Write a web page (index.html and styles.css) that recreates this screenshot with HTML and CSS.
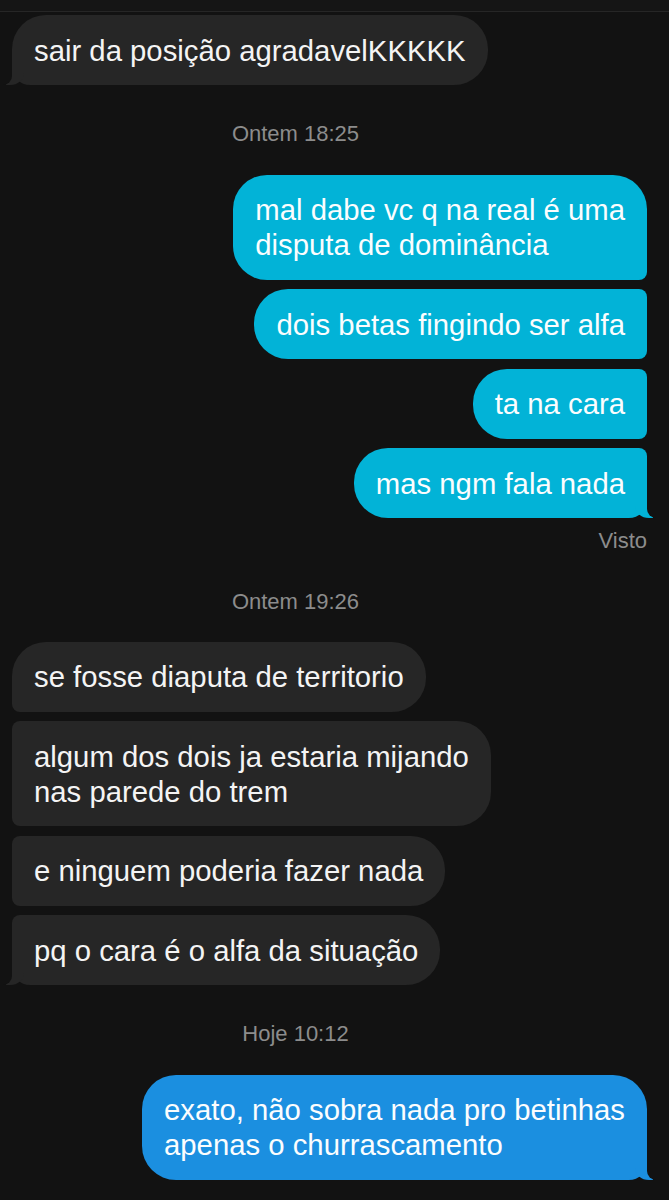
FILE: index.html
```html
<!DOCTYPE html>
<html lang="pt">
<head>
    <meta charset="UTF-8">
    <meta name="viewport" content="width=device-width, initial-scale=1.0">
    <title>Conversa</title>
    <link rel="stylesheet" href="styles.css">
</head>
<body>
    <div class="topbar"></div>
    <div class="chat">
        <div class="group in first-group">
            <div class="bubble gray tail">sair da posição agradavelKKKKK</div>
        </div>

        <div class="stamp">Ontem 18:25</div>

        <div class="group out">
            <div class="bubble blue top">mal dabe vc q na real é uma<br>disputa de dominância</div>
            <div class="bubble blue mid">dois betas fingindo ser alfa</div>
            <div class="bubble blue mid">ta na cara</div>
            <div class="bubble blue tail">mas ngm fala nada</div>
        </div>
        <div class="seen">Visto</div>

        <div class="stamp">Ontem 19:26</div>

        <div class="group in">
            <div class="bubble gray top">se fosse diaputa de territorio</div>
            <div class="bubble gray mid">algum dos dois ja estaria mijando<br>nas parede do trem</div>
            <div class="bubble gray mid">e ninguem poderia fazer nada</div>
            <div class="bubble gray tail">pq o cara é o alfa da situação</div>
        </div>

        <div class="stamp">Hoje 10:12</div>

        <div class="group out">
            <div class="bubble deep tail">exato, não sobra nada pro betinhas<br>apenas o churrascamento</div>
        </div>
    </div>
</body>
</html>
```

FILE: styles.css
```css
body {
    margin: 0;
    padding: 0;
    background-color: #121212;
    font-family: "Liberation Sans", Arial, sans-serif;
    color: #f4f4f4;
}
.topbar {
    height: 11px;
    background-color: #151515;
    border-bottom: 1px solid #262626;
}
.chat {
    display: flex;
    flex-direction: column;
    padding: 0 22px 0 12px;
}
.group {
    display: flex;
    flex-direction: column;
    gap: 9.5px;
}
.group.in {
    align-items: flex-start;
}
.group.out {
    align-items: flex-end;
}
.first-group {
    margin-top: 3px;
}
.bubble {
    position: relative;
    font-size: 29.3px;
    line-height: 35px;
    padding: 17.5px 22px;
    border-radius: 34px;
    white-space: nowrap;
}
.gray {
    background-color: #262626;
}
.blue {
    background-color: #02b3d7;
    color: #fbfdfe;
}
.deep {
    background-color: #1b8fe0;
    color: #fbfdfe;
}

/* grouped corners */
.in .top { border-bottom-left-radius: 8px; }
.in .mid { border-top-left-radius: 8px; border-bottom-left-radius: 8px; }
.in .tail { border-bottom-left-radius: 18px; }
.in .mid + .tail { border-top-left-radius: 8px; }
.out .top { border-bottom-right-radius: 8px; }
.out .mid { border-top-right-radius: 8px; border-bottom-right-radius: 8px; }
.out .tail { border-bottom-right-radius: 18px; }
.out .mid + .tail { border-top-right-radius: 8px; }

/* little tails */
.tail::before,
.tail::after {
    content: "";
    position: absolute;
    bottom: 0;
    height: 18px;
}
.in .tail::before {
    left: -6px;
    width: 18px;
    background-color: #262626;
    border-bottom-right-radius: 14px 12px;
}
.in .tail::after {
    left: -24px;
    width: 24px;
    background-color: #121212;
    border-bottom-right-radius: 9px;
}
.out .tail::before {
    right: -6px;
    width: 18px;
    background-color: inherit;
    border-bottom-left-radius: 14px 12px;
}
.out .tail::after {
    right: -24px;
    width: 24px;
    background-color: #121212;
    border-bottom-left-radius: 9px;
}

.stamp {
    font-size: 22px;
    line-height: 24px;
    color: #8c8c8c;
    text-align: center;
    padding-right: 68px;
    margin: 35px 0 30px;
}
.seen {
    align-self: flex-end;
    font-size: 22px;
    line-height: 24px;
    color: #8c8c8c;
    margin-top: 10.5px;
    margin-bottom: 1px;
}
.seen + .stamp {
    margin-top: 36px;
    margin-bottom: 28px;
}
.group.in + .stamp {
    margin-top: 36.5px;
    margin-bottom: 29px;
}
```
